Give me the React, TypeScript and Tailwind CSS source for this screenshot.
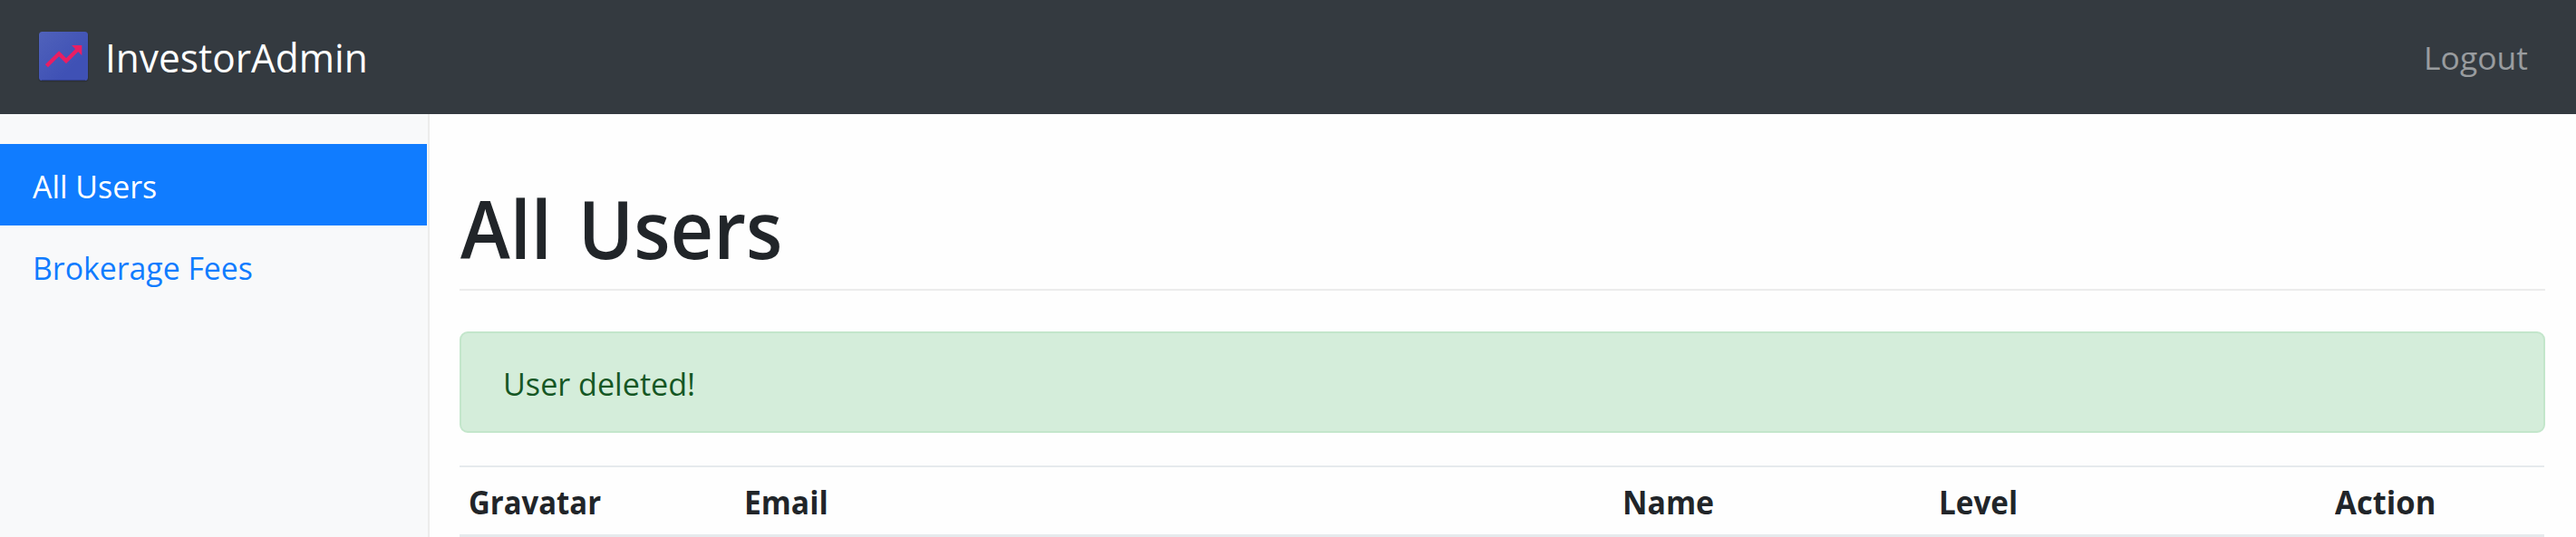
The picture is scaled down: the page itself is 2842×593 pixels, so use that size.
function BrandIcon() {
  return (
    <svg width="58" height="58" viewBox="-2 -2 58 58" className="shrink-0" aria-hidden="true">
      <defs>
        <linearGradient id="tile" x1="0" y1="0" x2="0.7" y2="0.7">
          <stop offset="0" stopColor="#5062bb" />
          <stop offset="1" stopColor="#3f51b5" />
        </linearGradient>
      </defs>
      <rect x="-0.7" y="0.6" width="55.4" height="55" rx="4" fill="#23272e" opacity="0.45" />
      <rect x="0" y="0" width="54" height="54" rx="3.5" fill="url(#tile)" />
      <path d="M3 53.5H51" stroke="#303d86" strokeWidth="1" />
      <path d="M8.4 37.7L22.1 24.3L30 32.2L44 18.2" fill="none" stroke="#e91e63" strokeWidth="4.4" />
      <path d="M36 15H47.3V26.3Z" fill="#e91e63" />
    </svg>
  );
}

const columns = [
  { label: 'Gravatar', cell: 'w-[304px]', text: 'scale-x-[0.925]' },
  { label: 'Email', cell: 'w-[969px]', text: 'scale-x-[0.947]' },
  { label: 'Name', cell: 'w-[349px]', text: 'scale-x-[0.952]' },
  { label: 'Level', cell: 'w-[437px]', text: 'scale-x-[0.936]' },
  { label: 'Action', cell: 'flex-1', text: 'scale-x-[0.975]' },
];

export default function App() {
  return (
    <div className="flex h-[593px] w-full flex-col overflow-hidden bg-[#fefefe] font-['Open_Sans','Noto_Sans',sans-serif] text-[35.5px] leading-[54px] text-[#212529]">
      <header className="flex h-[126px] shrink-0 items-center justify-between bg-[#343a40] pr-[53px] pl-[41px]">
        <a href="#" className="flex items-center text-[44.3px] text-white">
          <span className="-mt-[2px]">
            <BrandIcon />
          </span>
          <span className="ml-[17px] inline-block origin-left scale-x-[0.957]">InvestorAdmin</span>
        </a>
        <a href="#" className="text-[#999c9f]">Logout</a>
      </header>

      <div className="flex min-h-0 flex-1">
        <nav className="w-[474px] shrink-0 border-r-2 border-[#ececec] bg-[#f8f9fa] pt-[33px] pr-px">
          <a href="#" className="flex h-[90px] items-center bg-[#107cff] pt-0.5 pl-9 text-white">
            <span className="inline-block origin-left scale-x-[0.954]">All Users</span>
          </a>
          <a href="#" className="flex h-[90px] items-center pt-0.5 pl-9 text-[#107cff]">
            <span className="inline-block origin-left scale-x-[0.952]">Brokerage Fees</span>
          </a>
        </nav>

        <main className="flex-1 pt-[71px] pr-[34px] pl-[33px]">
          <h1 className="h-[124px] border-b-2 border-[#ececec] pl-px text-[88px] leading-[108px] font-semibold">
            <span className="inline-block origin-left translate-y-px scale-x-[0.94] [word-spacing:8px]">All Users</span>
          </h1>

          <div className="mt-[45px] flex h-[112px] items-center rounded-[9px] border-2 border-[#c3e6cb] bg-[#d4edda] pt-0.5 pl-[46px] text-[#155724]">
            <span className="inline-block origin-left scale-x-[0.961]">User deleted!</span>
          </div>

          <div className="mt-9 mr-px flex h-[79px] items-center border-t-2 border-b-[3px] border-[#e6eaed] pt-0.5 pl-[10px] font-bold">
            {columns.map((c) => (
              <div key={c.label} className={c.cell}>
                <span className={`inline-block origin-left ${c.text}`}>{c.label}</span>
              </div>
            ))}
          </div>
        </main>
      </div>
    </div>
  );
}
